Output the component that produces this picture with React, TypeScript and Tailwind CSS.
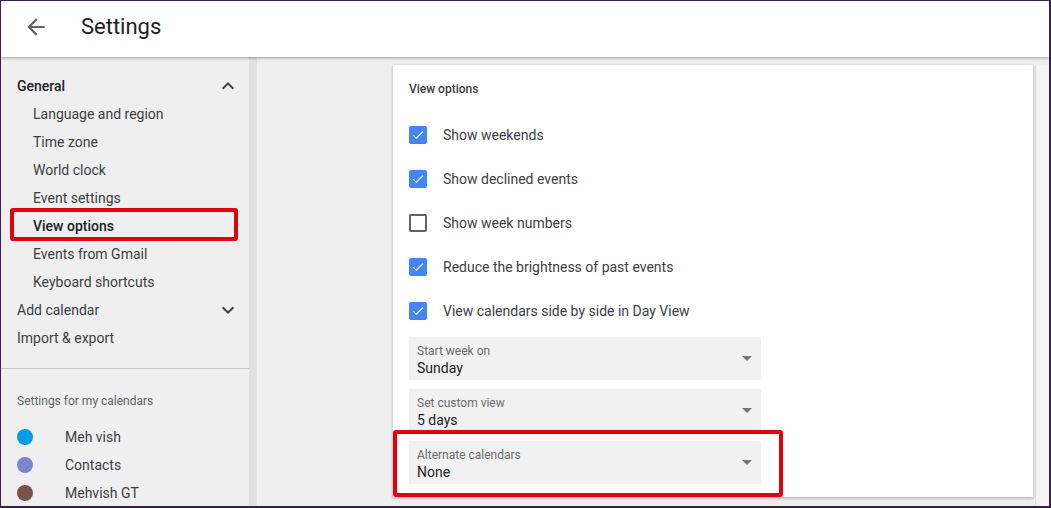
import React from 'react'

const subItems = [
  'Language and region',
  'Time zone',
  'World clock',
  'Event settings',
  'View options',
  'Events from Gmail',
  'Keyboard shortcuts',
]

const options = [
  { label: 'Show weekends', checked: true },
  { label: 'Show declined events', checked: true },
  { label: 'Show week numbers', checked: false },
  { label: 'Reduce the brightness of past events', checked: true },
  { label: 'View calendars side by side in Day View', checked: true },
]

const selects = [
  { label: 'Start week on', value: 'Sunday' },
  { label: 'Set custom view', value: '5 days' },
  { label: 'Alternate calendars', value: 'None' },
]

const calendars = [
  { name: 'Meh vish', color: 'bg-[#039be5]' },
  { name: 'Contacts', color: 'bg-[#7986cb]' },
  { name: 'Mehvish GT', color: 'bg-[#795548]' },
]

const Chevron = ({ up }: { up?: boolean }) => (
  <svg width="24" height="24" viewBox="0 0 24 24" className="text-[#3c4043]">
    {up ? (
      <path d="M12 8l-6 6 1.41 1.41L12 10.83l4.59 4.58L18 14z" fill="currentColor" />
    ) : (
      <path d="M16.59 8.59L12 13.17 7.41 8.59 6 10l6 6 6-6z" fill="currentColor" />
    )}
  </svg>
)

const Checkbox = ({ checked }: { checked: boolean }) =>
  checked ? (
    <span className="flex h-[18px] w-[18px] items-center justify-center rounded-[2px] bg-[#4285f4]">
      <svg width="14" height="14" viewBox="0 0 24 24">
        <path d="M9 16.17L4.83 12l-1.42 1.41L9 19 21 7l-1.41-1.41z" fill="#fff" />
      </svg>
    </span>
  ) : (
    <span className="h-[18px] w-[18px] rounded-[2px] border-2 border-[#5f6368]" />
  )

const App = () => {
  return (
    <div
      className="flex h-[508px] w-[1051px] flex-col overflow-hidden border border-r-2 border-b-2 border-[#3d1d4b] bg-[#eeeeee]"
      style={{ fontFamily: 'Roboto, "Liberation Sans", sans-serif' }}
    >
      <header className="relative z-10 flex h-[56px] shrink-0 items-center bg-white pb-[5px] shadow-[0_1px_3px_rgba(0,0,0,0.35)]">
        <svg width="26" height="26" viewBox="0 0 24 24" className="ml-[22px] text-[#5f6368]">
          <path d="M20 11H7.83l5.59-5.59L12 4l-8 8 8 8 1.41-1.41L7.83 13H20v-2z" fill="currentColor" />
        </svg>
        <h1 className="ml-[32px] text-[22px] leading-none text-[#202124]">Settings</h1>
      </header>

      <div className="flex min-h-0 flex-1">
        <aside className="relative w-[248px] shrink-0 bg-[#efefef] pt-[15px] text-[14px] text-[#3c4043]">
          <div className="flex h-[28px] items-center justify-between pl-[16px] pr-[9px]">
            <span className="font-medium text-[#202124]">General</span>
            <Chevron up />
          </div>
          {subItems.map(item => (
            <div
              key={item}
              className={
                item === 'View options'
                  ? 'flex h-[28px] items-center pl-[32px] font-medium text-[#202124]'
                  : 'flex h-[28px] items-center pl-[32px]'
              }
            >
              {item}
            </div>
          ))}
          <div className="flex h-[28px] items-center justify-between pl-[16px] pr-[9px]">
            <span>Add calendar</span>
            <Chevron />
          </div>
          <div className="flex h-[28px] items-center pl-[16px]">Import &amp; export</div>

          <div className="mt-[16px] border-t border-[#c8c8c8]" />

          <div className="mt-[24px] flex h-[16px] items-center pl-[16px] text-[12px] text-[#5f6368]">
            Settings for my calendars
          </div>
          <div className="mt-[14px]">
            {calendars.map(c => (
              <div key={c.name} className="flex h-[28px] items-center pl-[16px]">
                <span className={`h-[16px] w-[16px] rounded-full ${c.color}`} />
                <span className="ml-[32px]">{c.name}</span>
              </div>
            ))}
          </div>

          <div className="absolute left-[9px] top-[151px] h-[33px] w-[228px] rounded-[3px] border-4 border-[#e3000f]" />
        </aside>

        <div className="w-[8px] shrink-0 bg-[#e0e0e0]" />

        <main className="flex flex-1 pt-[8px]">
          <div className="ml-[136px] w-[640px] shrink-0">
            <section className="relative h-[432px] bg-white px-[16px] pt-[16px] shadow-[0_1px_3px_rgba(0,0,0,0.3)]">
              <h2 className="h-[16px] text-[12px] leading-[16px] font-medium text-[#3c4043]">View options</h2>
              <div className="mt-[16px]">
                {options.map(o => (
                  <label key={o.label} className="flex h-[44px] items-center text-[14px] text-[#3c4043]">
                    <Checkbox checked={o.checked} />
                    <span className="ml-[16px]">{o.label}</span>
                  </label>
                ))}
              </div>
              <div className="mt-[4px] flex flex-col gap-[9px]">
                {selects.map(s => (
                  <div
                    key={s.label}
                    className="flex h-[43px] w-[352px] justify-between rounded-t-[2px] bg-[#f1f1f1] pl-[8px] pr-[9px] pt-[7px]"
                  >
                    <div className="flex flex-col">
                      <span className="text-[12px] leading-[14px] text-[#6b6b6b]">{s.label}</span>
                      <span className="mt-[2px] text-[14px] leading-[17px] text-[#202124]">{s.value}</span>
                    </div>
                    <svg width="10" height="5" viewBox="0 0 10 5" className="mt-[12px]">
                      <path d="M0 0l5 5 5-5z" fill="#757575" />
                    </svg>
                  </div>
                ))}
              </div>

              <div className="absolute left-0 top-[365px] h-[67px] w-[390px] rounded-[3px] border-4 border-[#e3000f]" />
            </section>
          </div>
          <div className="flex-1" />
          <div className="w-[14px] shrink-0 border-l border-[#dcdcdc] bg-[#f3f3f3]" />
        </main>
      </div>
    </div>
  )
}

export default App
